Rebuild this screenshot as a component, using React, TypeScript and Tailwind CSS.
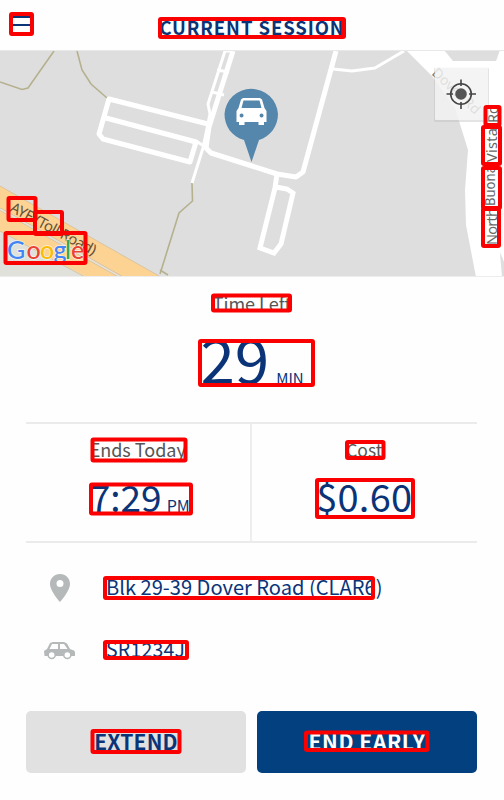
import React from "react";

const marks: [number, number, number, number][] = [
  [9, 12, 25, 24],
  [158, 17, 188, 22],
  [6.5, 196, 31, 26],
  [33, 210, 31, 26],
  [3.5, 231, 84, 34],
  [483.5, 105, 18, 22],
  [481, 125, 21, 41],
  [481, 166, 21, 44],
  [481, 207, 20, 41],
  [211, 293.5, 81, 19],
  [198, 339, 117, 48],
  [90.5, 437.5, 97, 25],
  [89, 482.5, 104, 33],
  [345, 440, 40.5, 20],
  [315, 478, 100, 41],
  [103, 576, 272, 24],
  [103, 640, 86, 20],
  [90.5, 729, 91, 25],
  [304, 730.5, 125.5, 21.5],
];

function Marks() {
  return (
    <svg className="pointer-events-none absolute inset-0" width="504" height="800" viewBox="0 0 504 800">
      {marks.map(([x, y, w, h], i) => (
        <rect key={i} x={x + 2} y={y + 2} width={w - 4} height={h - 4} rx="1" fill="none" stroke="#fa0000" strokeWidth="4" />
      ))}
    </svg>
  );
}

function StreetMap() {
  return (
    <svg className="block shrink-0" width="504" height="227" viewBox="0 50 504 227" fontFamily="'Noto Sans', sans-serif">
      <rect y="50" width="504" height="227" fill="#dedede" />
      <path d="M0 227L88 277H0Z" fill="#e0e1da" />
      <path d="M0 186L159 276H85L0 231Z" fill="#fdd393" />
      <path d="M0 186L159 276M0 231L85 277" stroke="#d9c49e" strokeWidth="1" />
      <path d="M0 209L121 277" stroke="#c9b99a" strokeWidth="3" />
      <path d="M0 209L121 277" stroke="#e6dfd2" strokeWidth="2" />
      <g fill="none" stroke="#b5b18f" strokeWidth="1.6">
        <path d="M0 82L22 89.500L28 88L54 51M77 51L82 70L91 84L107 98M192 183L192.500 201L179 213L160 274M160 270L168 275" />
      </g>
      <g fill="none" stroke="#fff" strokeWidth="5" strokeLinejoin="round">
        <path d="M208 124L109 99L99 134L103 139L190 162L196 142L106 118" />
        <path d="M233 51L209 127L206 148L211 153L252 166L277 174L296 177L303 172L336 51" />
        <path d="M277 174L275 188L260 248L274 253L281 244L293 193L287 189L276 187" strokeLinejoin="miter" />
        <path d="M333 69L352 71L375 68L404 51" strokeWidth="3" />
        <path d="M225 51L208 104L210 114L203 148L192 183M217 70L229 72M212 92L224 95M196 141L207 148M224 51H233" strokeWidth="3" />
      </g>
      <path d="M406 50H444L453 61H496L500 50H504V262L500 252L504 277H476L466 225L465 190L468 150L455 108L432 76Z" fill="#fff" />
      <path d="M500 253L504 264V277H502Z" fill="#dedede" />

      <text transform="translate(431 74) rotate(43)" fontSize="14" fill="#777">Dover Rd</text>
      <g fontSize="14.500" fill="#666">
        <text transform="translate(497 245) rotate(-90)" textLength="37">North</text>
        <text transform="translate(495 206) rotate(-90)" textLength="40" lengthAdjust="spacingAndGlyphs">Buona</text>
        <text transform="translate(497 162) rotate(-90)" textLength="34">Vista</text>
        <text transform="translate(498 123) rotate(-90)">Rd</text>
      </g>
      <text transform="translate(9 211) rotate(28)" fontSize="15" fill="#65513a" textLength="95">AYE (Toll Road)</text>

      <rect x="434" y="68" width="55" height="54" rx="1" fill="#bcbcbc" opacity=".4" />
      <rect x="435" y="67" width="53" height="53" rx="1" fill="#fafafa" opacity=".74" />
      <g stroke="#444" fill="none">
        <circle cx="461" cy="94" r="10.300" strokeWidth="1.600" />
        <path d="M461 79.500V86M461 102V109M446.500 94H453M469 94H476" strokeWidth="1.600" />
        <circle cx="461" cy="94" r="5.800" fill="#555" stroke="none" />
      </g>

      <path d="M251.500 162L244 140C232 137 224.500 126 224.500 114A26.800 26.800 0 0 1 278 114C278 126 270 137 259 140Z" fill="#5586ab" />
      <path fillRule="evenodd" fill="#fff" d="M243 98H260L262 99.500L264.500 108L266.500 111V122H264V125H258.500V122H244.500V125H239V122H236.500V111L238.500 108L241 99.500ZM243.500 100.500L241.500 108H261.500L259.500 100.500ZM241.500 113.500A2 2 0 1 0 241.600 117.500A2 2 0 1 0 241.500 113.500ZM261.500 113.500A2 2 0 1 0 261.600 117.500A2 2 0 1 0 261.500 113.500Z" />

      <clipPath id="logo">
        <rect x="4" y="232" width="82" height="31" />
      </clipPath>
      <g clipPath="url(#logo)" fontFamily="Lato, sans-serif" fontSize="25" fontWeight="500" stroke="#fff" strokeOpacity=".7" strokeWidth="1.500" paintOrder="stroke">
        <text x="7" y="259" fill="#4285f4">G</text>
        <text x="26.500" y="259" fill="#ea4335">o</text>
        <text x="40" y="259" fill="#fbbc05">o</text>
        <text x="53.500" y="259" fill="#4285f4">g</text>
        <text x="65" y="259" fill="#34a853">l</text>
        <text x="71" y="259" fill="#ea4335">e</text>
      </g>
      <path d="M0 50.500H504" stroke="#e8e8e8" strokeWidth="1" />
      <path d="M0 276.500H504" stroke="#ededed" strokeWidth="1" />
    </svg>
  );
}

export default function App() {
  return (
    <main className="relative flex h-[800px] w-[504px] flex-col overflow-hidden bg-[#fefefe] font-['Noto_Sans_CJK_SC',sans-serif] text-[#0b3478]">
      <header className="grid h-[50px] shrink-0 grid-cols-[46px_1fr_46px] items-center">
        <div className="flex flex-col gap-[6px] pl-[13px]">
          <i className="h-[2px] w-[17px] bg-[#0b3478]" />
          <i className="h-[2px] w-[17px] bg-[#0b3478]" />
          <i className="h-[2px] w-[17px] bg-[#0b3478]" />
        </div>
        <h1 className="pt-[5px] text-center text-[18.5px] leading-none font-bold tracking-[0.9px] whitespace-nowrap">CURRENT SESSION</h1>
      </header>
      <StreetMap />
      <section className="flex h-[145px] shrink-0 flex-col items-center">
        <p className="mt-[14px] h-[24px] text-[18px] leading-[24px] text-[#555]">Time Left</p>
        <p className="mt-[9px] flex h-[66px] items-baseline gap-[7px] text-[62px] leading-[66px]">
          29<span className="text-[15px] leading-none">MIN</span>
        </p>
      </section>
      <section className="mr-[27px] ml-[26px] grid h-[121px] shrink-0 grid-cols-2 border-y-2 border-[#ebebeb] text-center">
        <div className="border-r-2 border-[#eeeeee]">
          <p className="mt-[13px] h-[24px] text-[18px] leading-[24px] text-[#555]">Ends Today</p>
          <p className="mt-[13px] flex h-[44px] items-baseline justify-center gap-[5px] pl-[4px] text-[37px] leading-[44px]">
            7:29<span className="text-[16px] leading-none">PM</span>
          </p>
        </div>
        <div>
          <p className="mt-[14px] h-[24px] text-[17.5px] leading-[24px] text-[#555]">Cost</p>
          <p className="mt-[12px] h-[44px] text-[38px] leading-[44px] tracking-[0.2px]">$0.60</p>
        </div>
      </section>
      <section className="flex h-[168px] shrink-0 flex-col pt-[13px] text-[20px]">
        <div className="flex h-[63px] items-center">
          <svg className="mr-[30px] ml-[43px]" width="33" height="30" viewBox="0 0 33 30">
            <path fillRule="evenodd" fill="#b5b9ba" d="M17 1C11 1 7 5.500 7 11C7 18 17 29 17 29S27 18 27 11C27 5.500 23 1 17 1ZM17 7A3.500 3.500 0 1 1 17 14A3.500 3.500 0 1 1 17 7Z" />
          </svg>
          <span className="text-[20.1px] whitespace-nowrap">Blk 29-39 Dover Road (CLAR6)</span>
        </div>
        <div className="flex h-[63px] items-center">
          <svg className="mr-[30px] ml-[43px]" width="33" height="20" viewBox="0 0 33 20">
            <path fillRule="evenodd" fill="#b5b9ba" d="M7 2L10 1H21L24 2.500L27 8L31 9.500L32 11V15H28A4 4 0 0 1 20.500 15H12.500A4 4 0 0 1 5 15H1.500L1 10L4 8ZM9 3L6.500 8H15V3ZM17 3V8H24.500L21 3Z" />
            <circle cx="8.700" cy="14" r="3.500" fill="#fff" stroke="#b5b9ba" strokeWidth="1.500" />
            <circle cx="24.300" cy="14" r="3.500" fill="#fff" stroke="#b5b9ba" strokeWidth="1.500" />
          </svg>
          <span className="pb-[3px] text-[19.5px] tracking-[0.2px]">SR1234J</span>
        </div>
      </section>
      <footer className="mr-[27px] ml-[26px] grid h-[62px] shrink-0 grid-cols-[220px_220px] justify-between text-[21px] leading-none font-bold">
        <button className="rounded-[5px] bg-[#e1e1e1] pb-[2px] tracking-[0.2px]">EXTEND</button>
        <button className="rounded-[5px] bg-[#03407f] pb-[2px] tracking-[0.6px] text-white">END EARLY</button>
      </footer>
      <Marks />
    </main>
  );
}
